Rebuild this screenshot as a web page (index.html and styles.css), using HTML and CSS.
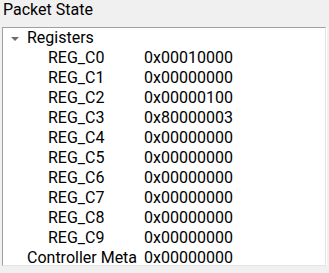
FILE: index.html
```html
<!DOCTYPE html>
<html lang="en">

<head>
    <meta charset="UTF-8"/>
    <title>Packet State</title>
    <link rel="stylesheet" href="styles.css">
</head>

<body>
<div class="title">Packet State</div>
<div class="tree">
    <div class="row">
        <span class="label group"><span class="arrow"></span>Registers</span>
        <span class="value"></span>
    </div>
    <div class="row"><span class="label child">REG_C0</span><span class="value">0x00010000</span></div>
    <div class="row"><span class="label child">REG_C1</span><span class="value">0x00000000</span></div>
    <div class="row"><span class="label child">REG_C2</span><span class="value">0x00000100</span></div>
    <div class="row"><span class="label child">REG_C3</span><span class="value">0x80000003</span></div>
    <div class="row"><span class="label child">REG_C4</span><span class="value">0x00000000</span></div>
    <div class="row"><span class="label child">REG_C5</span><span class="value">0x00000000</span></div>
    <div class="row"><span class="label child">REG_C6</span><span class="value">0x00000000</span></div>
    <div class="row"><span class="label child">REG_C7</span><span class="value">0x00000000</span></div>
    <div class="row"><span class="label child">REG_C8</span><span class="value">0x00000000</span></div>
    <div class="row"><span class="label child">REG_C9</span><span class="value">0x00000000</span></div>
    <div class="row"><span class="label top">Controller Meta</span><span class="value">0x00000000</span></div>
</div>
</body>

</html>
```

FILE: styles.css
```css
* {
    margin: 0;
    padding: 0;
    box-sizing: border-box;
}

body {
    background: #f0f0f0;
    font-family: Roboto, "Liberation Sans", sans-serif;
    font-size: 16px;
    color: #000;
}

.title {
    height: 27px;
    line-height: 20px;
    padding-left: 3px;
}

.tree {
    height: 239px;
    margin: 0 3px 0 2px;
    background: #fff;
    border-top: 1px solid #a0a0a0;
    border-left: 1px solid #a0a0a0;
    border-right: 1px solid #e3e3e3;
    border-bottom: 1px solid #e3e3e3;
    box-shadow: 1px 1px 0 #fff;
    overflow: hidden;
}

.row {
    display: grid;
    grid-template-columns: 141px 1fr;
    height: 20px;
    line-height: 20px;
    white-space: nowrap;
}

.label {
    display: flex;
    align-items: center;
}

.group {
    padding-left: 8px;
}

.top {
    padding-left: 24px;
}

.child {
    padding-left: 45px;
}

.arrow {
    width: 0;
    height: 0;
    margin: 1px 8px 0 0;
    border-left: 4px solid transparent;
    border-right: 4px solid transparent;
    border-top: 4px solid #6d6d6d;
}
```
